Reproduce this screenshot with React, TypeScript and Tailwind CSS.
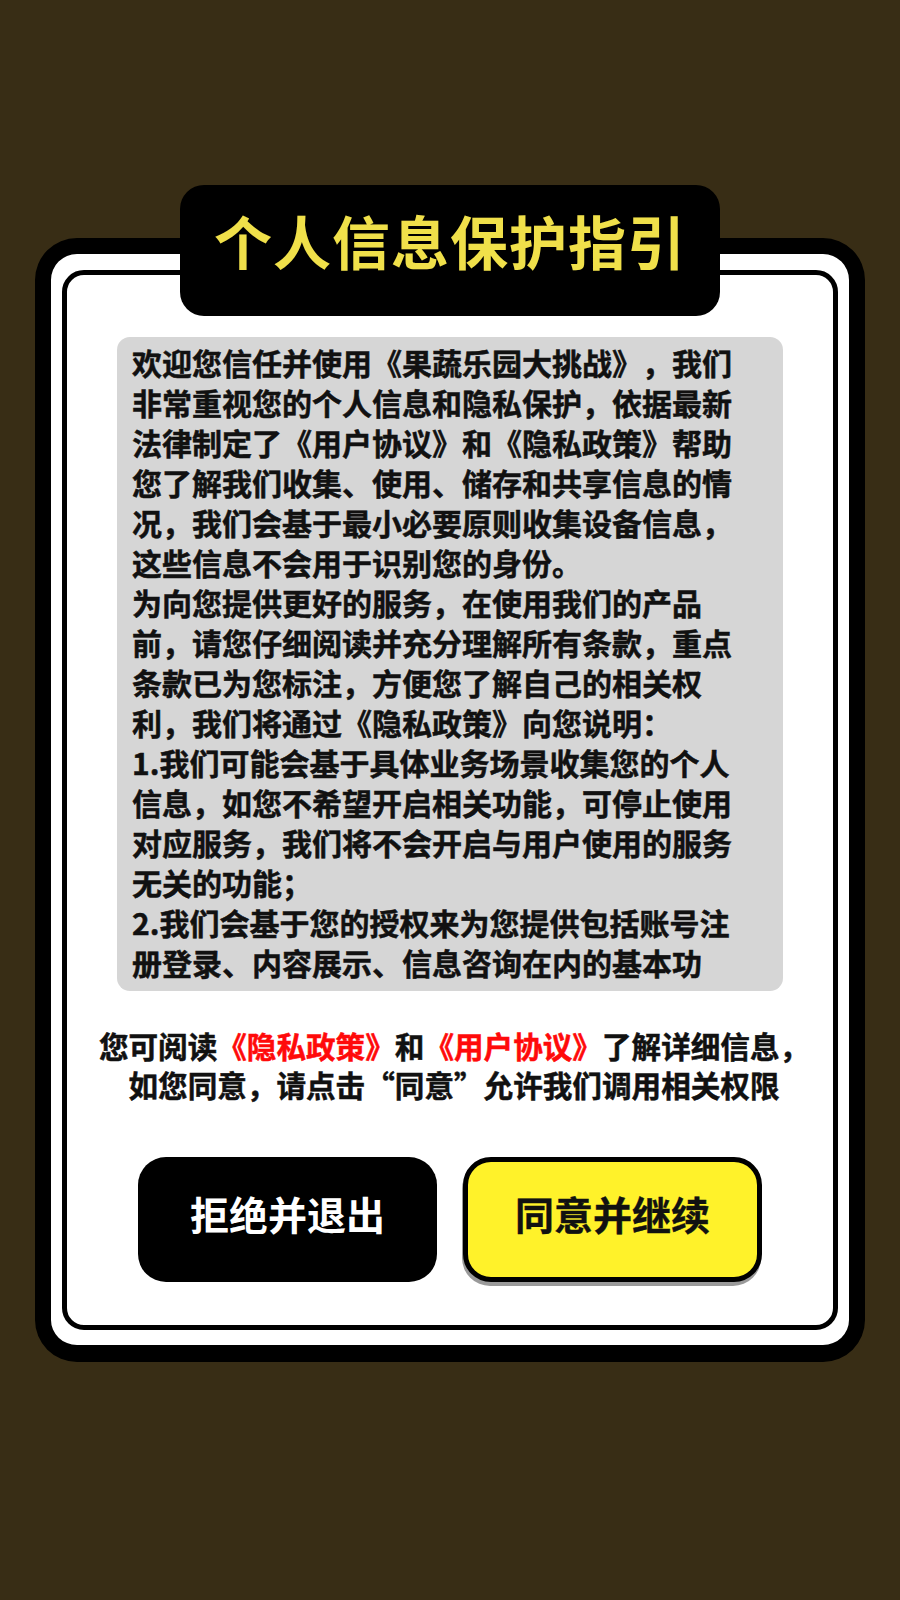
const font = { fontFamily: '"Noto Sans CJK SC", "Noto Sans", sans-serif' };

const notice =
  "欢迎您信任并使用《果蔬乐园大挑战》，我们非常重视您的个人信息和隐私保护，依据最新法律制定了《用户协议》和《隐私政策》帮助您了解我们收集、使用、储存和共享信息的情况，我们会基于最小必要原则收集设备信息，这些信息不会用于识别您的身份。";
const notice2 =
  "为向您提供更好的服务，在使用我们的产品前，请您仔细阅读并充分理解所有条款，重点条款已为您标注，方便您了解自己的相关权利，我们将通过《隐私政策》向您说明：";
const items = [
  "1.我们可能会基于具体业务场景收集您的个人信息，如您不希望开启相关功能，可停止使用对应服务，我们将不会开启与用户使用的服务无关的功能；",
  "2.我们会基于您的授权来为您提供包括账号注册登录、内容展示、信息咨询在内的基本功",
];

export default function App() {
  return (
    <div className="w-[900px] h-[1600px] bg-[#382d15] pt-[238px] flex flex-col items-center" style={font}>
      <div className="relative w-[830px] h-[1124px] rounded-[42px] border-[16px] border-b-[17px] border-black bg-white px-[11px] pt-[16px] pb-[15px]">
        <div className="absolute left-[129px] top-[-69px] w-[540px] h-[131px] rounded-[24px] bg-black flex justify-center pt-[26px]">
          <span className="text-[58px] leading-[58px] font-bold text-[#f0e04a] tracking-[1px]">个人信息保护指引</span>
        </div>
        <div className="h-full rounded-[22px] border-[5px] border-black flex flex-col items-center pt-[62px]">
          <div className="w-[666px] h-[654px] rounded-[13px] bg-[#d6d6d6] overflow-hidden pl-[15px] pt-[5px]">
            <div className="w-[610px] text-[30px] leading-[40px] font-bold text-[#111] [text-spacing-trim:space-all] [-webkit-text-stroke:0.5px_#111]">
              <p>{notice}</p>
              <p>{notice2}</p>
              {items.map((t, i) => (
                <p key={i}>{t}</p>
              ))}
            </div>
          </div>
          <div className="mt-[35px] pl-[8px] text-center text-[29.6px] leading-[39px] font-bold text-[#111] [-webkit-text-stroke:0.5px_#111]">
            <p>
              您可阅读<span className="text-[#ff0a0a] [-webkit-text-stroke:0.5px_#ff0a0a]">《隐私政策》</span>和
              <span className="text-[#ff0a0a] [-webkit-text-stroke:0.5px_#ff0a0a]">《用户协议》</span>了解详细信息，
            </p>
            <p>如您同意，请点击“同意”允许我们调用相关权限</p>
          </div>
          <div className="mt-[53px] flex gap-[26px]">
            <button className="w-[299px] h-[125px] rounded-[28px] bg-black text-white text-[39px] leading-[40px] font-bold pb-[14px]">
              拒绝并退出
            </button>
            <button className="w-[299px] h-[125px] rounded-[28px] bg-[#fff22a] border-[5px] border-black text-[#111] text-[39px] leading-[40px] font-bold pb-[14px] shadow-[-1px_4px_0_#9a9a9a] [-webkit-text-stroke:0.4px_#111]">
              同意并继续
            </button>
          </div>
        </div>
      </div>
    </div>
  );
}
